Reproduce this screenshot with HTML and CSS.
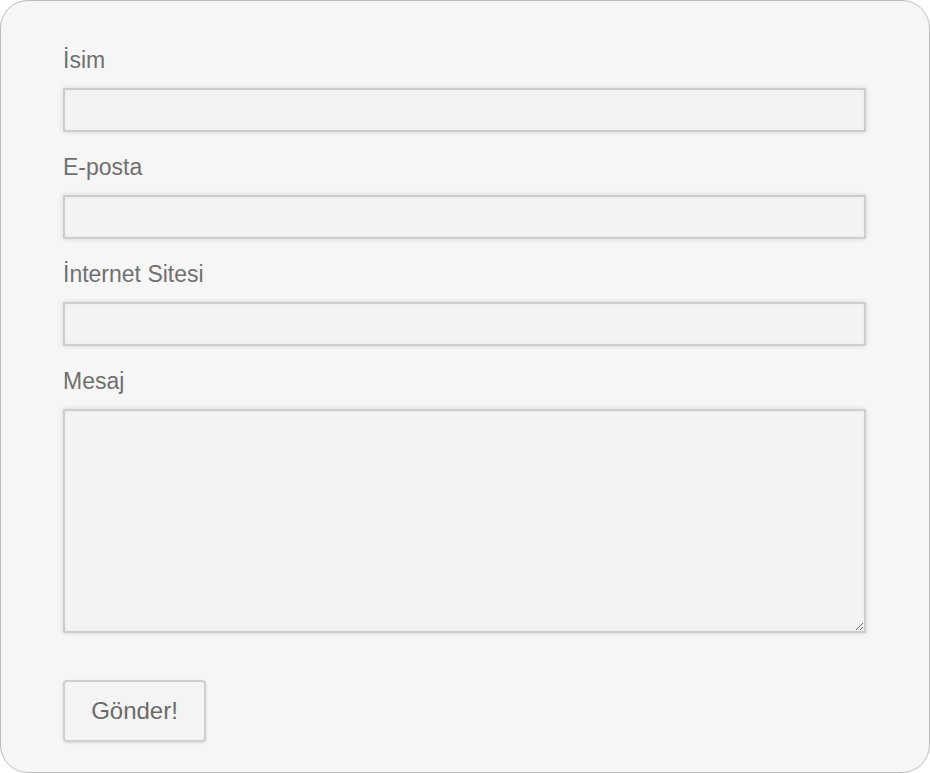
FILE: index.html
```html
<!DOCTYPE html>
<html lang="tr">
<head>
<meta charset="utf-8">
<title>İletişim</title>
<link rel="stylesheet" href="styles.css">
</head>
<body>
<form class="card">
  <label class="label" for="isim">İsim</label>
  <input class="field" id="isim" type="text">
  <label class="label" for="eposta">E-posta</label>
  <input class="field" id="eposta" type="text">
  <label class="label" for="site">İnternet Sitesi</label>
  <input class="field" id="site" type="text">
  <label class="label" for="mesaj">Mesaj</label>
  <textarea class="field area" id="mesaj"></textarea>
  <div class="actions">
    <button class="btn" type="button">Gönder!</button>
  </div>
</form>
</body>
</html>
```
FILE: styles.css
```css
html, body {
  margin: 0;
  padding: 0;
  background: #ffffff;
}
body {
  font-family: "Liberation Sans", Arial, sans-serif;
}
.card {
  box-sizing: border-box;
  width: 930px;
  height: 773px;
  margin: 0;
  padding: 46px 63px 0 62px;
  background: #f6f6f6;
  border: 1px solid #bdbdbd;
  border-radius: 28px;
  display: flex;
  flex-direction: column;
  align-items: stretch;
}
.label {
  display: block;
  font-size: 23px;
  line-height: 26px;
  color: #707070;
  margin: 0 0 15px 0;
}
.field {
  box-sizing: border-box;
  display: block;
  width: 803px;
  height: 44px;
  margin: 0 0 22px 0;
  padding: 0 10px;
  background: #f3f3f3;
  border: 2px solid #cdcdcd;
  border-radius: 1px;
  box-shadow: 0 0 5px rgba(0, 0, 0, 0.13), inset 0 0 3px rgba(0, 0, 0, 0.05);
  font-family: "Liberation Sans", Arial, sans-serif;
  font-size: 18px;
  color: #555;
  outline: none;
}
.area {
  height: 224px;
  margin-bottom: 0;
  resize: both;
}
.actions {
  margin-top: 47px;
}
.btn {
  box-sizing: border-box;
  width: 143px;
  height: 62px;
  background: #f4f4f4;
  border: 2px solid #d0d0d0;
  border-radius: 4px;
  box-shadow: 0 1px 3px rgba(0, 0, 0, 0.12);
  font-family: "Liberation Sans", Arial, sans-serif;
  font-size: 24px;
  color: #6a6a6a;
  padding: 0;
  cursor: pointer;
}
```
